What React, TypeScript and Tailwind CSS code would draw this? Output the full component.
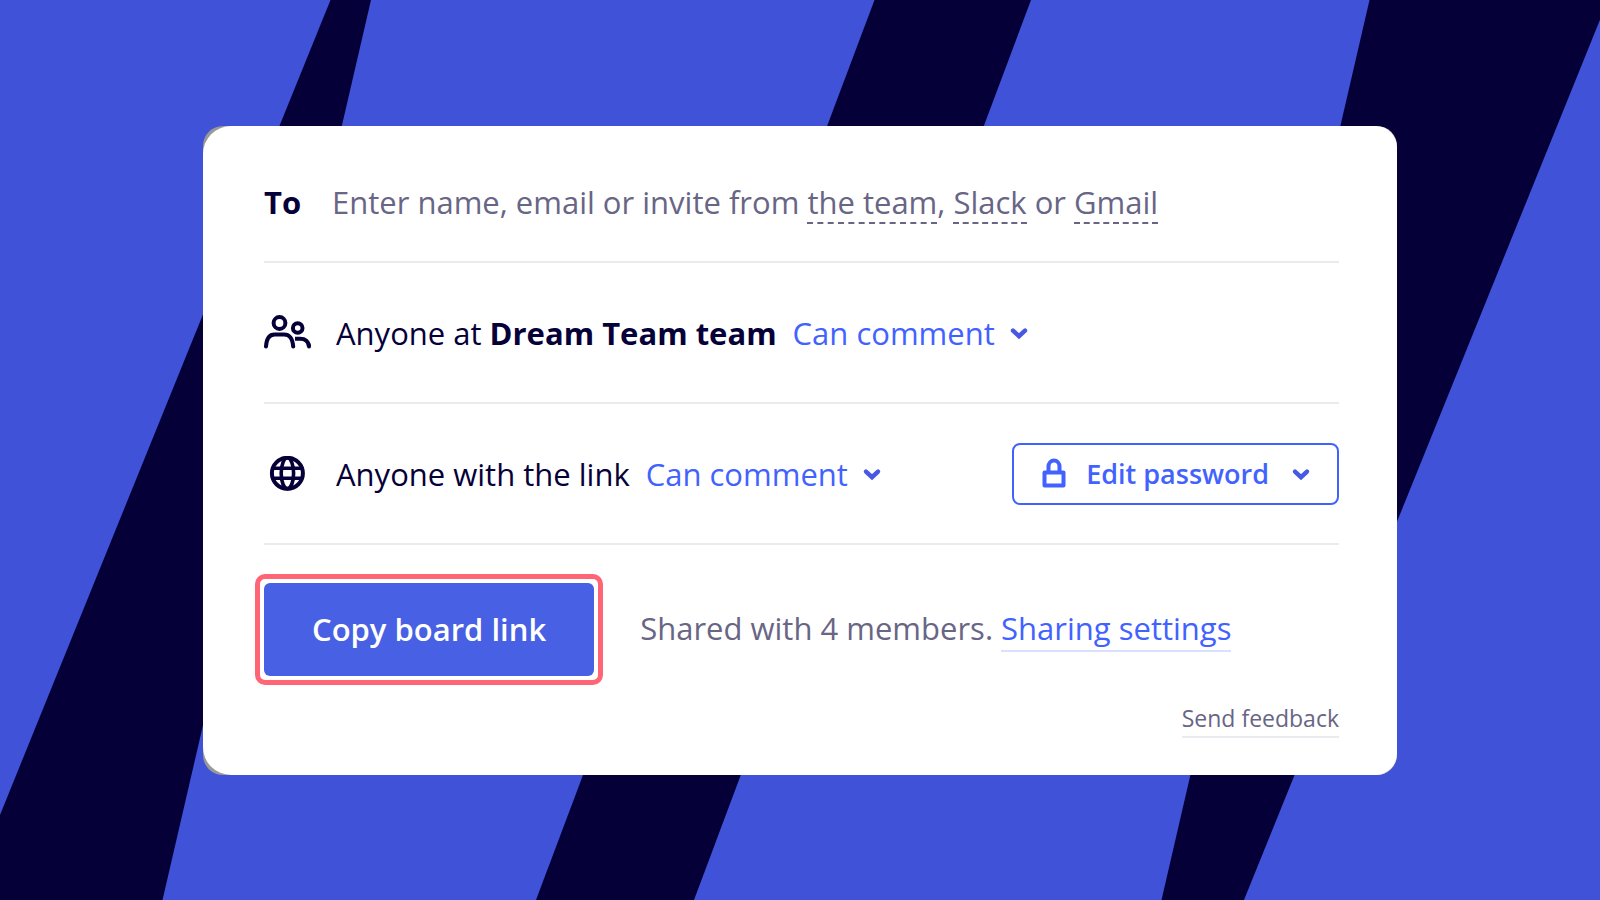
import type { ReactNode } from 'react';

const Stripes = () => (
  <svg
    aria-hidden="true"
    className="absolute inset-0 size-full"
    preserveAspectRatio="xMidYMid slice"
    viewBox="0 0 1600 900"
  >
    <g fill="#050038">
      <path d="M330.5 0H371L162.5 900H-34.5Z" />
      <path d="M874.5 0H1031L694 900H536Z" />
      <path d="M1369.5 0H1608L1244 900H1161.5Z" />
    </g>
  </svg>
);

const PeopleIcon = () => (
  <svg
    aria-hidden="true"
    className="w-12 h-9"
    fill="none"
    stroke="currentColor"
    strokeLinecap="round"
    strokeWidth="4"
    viewBox="0 0 48 36"
  >
    <circle cx="15.5" cy="8" r="5.9" />
    <circle cx="33.7" cy="13" r="4.8" />
    <path d="M2 31.5C2.5 23.5 5.6 19.6 10.5 19.6H20C26 19.6 28.5 23.5 29.2 31.5" />
    <path strokeLinecap="butt" d="M31 23.7H36C42 23.7 44.5 26.5 45 31.5" />
    <path d="M44.7 29.5L45 31.5" />
  </svg>
);

const GlobeIcon = () => (
  <svg
    aria-hidden="true"
    className="w-12 h-9"
    fill="none"
    stroke="currentColor"
    strokeWidth="4"
    viewBox="0 0 48 36"
  >
    <circle cx="23.4" cy="17.3" r="15.5" />
    <ellipse cx="23.4" cy="17.3" rx="6.2" ry="15.5" strokeWidth="3.6" />
    <path d="M8.4 12.3H38.4M8.4 22.3H38.4" strokeWidth="3.6" />
  </svg>
);

const LockIcon = () => (
  <svg
    aria-hidden="true"
    className="w-6 h-8"
    fill="none"
    stroke="currentColor"
    strokeLinejoin="round"
    strokeWidth="4"
    viewBox="0 0 24 32"
  >
    <path d="M2.5 14.5H21.5V27.5H2.5Z" />
    <path d="M6.5 14.5V8.5A5.4 5.9 0 0 1 17.5 8.5V14.5" />
  </svg>
);

const Chevron = () => (
  <svg
    aria-hidden="true"
    className="w-4 h-3 overflow-visible pointer-events-none"
    fill="none"
    stroke="#4759e4"
    strokeLinecap="round"
    strokeWidth="4.4"
    viewBox="0 0 16 12"
  >
    <path d="M2 3.6L8 9.2L14 3.6" />
  </svg>
);

const InviteLink = ({ children }: { children: ReactNode }) => (
  <a
    className="inline-block border-b-2 border-dashed border-[#686585] leading-10 pointer-events-auto"
    href="#invite"
  >
    {children}
  </a>
);

type AccessRowProps = {
  id: string;
  icon: ReactNode;
  label: ReactNode;
  children?: ReactNode;
};

const AccessRow = ({ id, icon, label, children }: AccessRowProps) => (
  <div className="flex items-center h-[141px] pt-0.5 border-b-2 border-[#ebebef]">
    {icon}
    <label className="ml-6" htmlFor={id}>
      {label}
    </label>
    <div className="flex items-center gap-4 ml-4">
      <select
        className="appearance-none field-sizing-content text-[#4262ff] outline-none"
        defaultValue="comment"
        id={id}
      >
        <option value="view">Can view</option>
        <option value="comment">Can comment</option>
        <option value="edit">Can edit</option>
      </select>
      <Chevron />
    </div>
    {children}
  </div>
);

export default function App() {
  return (
    <main className="relative flex items-center justify-center min-h-screen overflow-hidden bg-[#4053d8] font-['Open_Sans',sans-serif] text-[31px] leading-11 text-[#050038]">
      <Stripes />

      <div className="relative w-full max-w-[1194px] rounded-[20px] bg-[#999999]">
        <section className="rounded-l-[28px] rounded-r-[21px] bg-white pl-[61px] pr-[58px] pb-[37px]">
          <div className="flex items-center h-[137px] pt-[18px] border-b-2 border-[#ebebef]">
            <label className="w-[68px] font-bold" htmlFor="invite-to">
              To
            </label>
            <div className="grid flex-1">
              <input
                className="col-start-1 row-start-1 w-full bg-transparent outline-none"
                id="invite-to"
                type="text"
              />
              <p className="col-start-1 row-start-1 text-[#686585] pointer-events-none">
                Enter name, email or invite from <InviteLink>the team</InviteLink>,{' '}
                <InviteLink>Slack</InviteLink> or <InviteLink>Gmail</InviteLink>
              </p>
            </div>
          </div>

          <AccessRow
            icon={<PeopleIcon />}
            id="team-access"
            label={
              <>
                Anyone at <strong className="font-bold">Dream Team team</strong>
              </>
            }
          />

          <AccessRow icon={<GlobeIcon />} id="link-access" label="Anyone with the link">
            <button
              className="flex items-center h-[62px] ml-auto px-7 border-2 border-[#4262ff] rounded-lg text-[27px] font-semibold text-[#4262ff]"
              type="button"
            >
              <LockIcon />
              <span className="ml-5 mr-6">Edit password</span>
              <Chevron />
            </button>
          </AccessRow>

          <div className="flex items-center mt-[29px]">
            <div className="-ml-[9px] p-1 border-5 border-[#ff6575] rounded-[10px]">
              <button
                className="h-[93px] px-12 rounded-md bg-[#4760e4] font-semibold text-white"
                type="button"
              >
                Copy board link
              </button>
            </div>
            <p className="ml-[37px] text-[#686585]">
              Shared with 4 members.{' '}
              <a
                className="inline-block border-b-2 border-[#d9e0ff] text-[#4262ff]"
                href="#sharing-settings"
              >
                Sharing settings
              </a>
            </p>
          </div>

          <div className="flex justify-end mt-[15px]">
            <a
              className="border-b-2 border-[#ebebef] text-[23px] leading-9 text-[#686585]"
              href="#feedback"
            >
              Send feedback
            </a>
          </div>
        </section>
      </div>
    </main>
  );
}
